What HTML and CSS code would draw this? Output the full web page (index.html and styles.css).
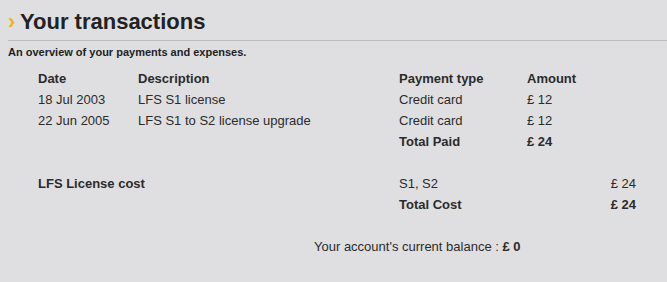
FILE: index.html
```html
<!DOCTYPE html>
<html>
<head>
<meta charset="utf-8">
<link rel="stylesheet" href="styles.css">
</head>
<body>
<div class="page">
  <header class="head">
    <span class="chev">›</span>
    <h1 class="title">Your transactions</h1>
  </header>
  <p class="sub">An overview of your payments and expenses.</p>
  <div class="content">
    <div class="grid">
      <div class="b">Date</div><div class="b">Description</div><div class="b">Payment type</div><div class="b">Amount</div>
      <div>18 Jul 2003</div><div>LFS S1 license</div><div>Credit card</div><div>£ 12</div>
      <div>22 Jun 2005</div><div>LFS S1 to S2 license upgrade</div><div>Credit card</div><div>£ 12</div>
      <div></div><div></div><div class="b">Total Paid</div><div class="b">£ 24</div>
    </div>
    <div class="grid second">
      <div class="b span2">LFS License cost</div><div>S1, S2</div><div class="r">£ 24</div>
      <div class="span2"></div><div class="b">Total Cost</div><div class="b r">£ 24</div>
    </div>
    <div class="balance">Your account's current balance : <b>£ 0</b></div>
  </div>
</div>
</body>
</html>
```
FILE: styles.css
```css
html, body {
  margin: 0;
  padding: 0;
  background: #dfdfe1;
}
body {
  font-family: "Liberation Sans", Arial, sans-serif;
  color: #2b2b2b;
}
.page {
  width: 667px;
  height: 282px;
}
.head {
  display: flex;
  align-items: center;
  gap: 4px;
  margin-left: 8px;
  padding: 9px 0 5px 0;
  border-bottom: 1px solid #b9b9bb;
}
.chev {
  color: #f2b01e;
  font-size: 22px;
  font-weight: bold;
  line-height: 26px;
  width: 8px;
}
.title {
  margin: 0;
  font-size: 22px;
  line-height: 26px;
  font-weight: bold;
  color: #222;
}
.sub {
  margin: 5px 0 0 8px;
  font-size: 11px;
  line-height: 13px;
  font-weight: bold;
  color: #222;
}
.content {
  padding: 9px 0 0 38px;
  font-size: 13px;
  line-height: 21px;
}
.grid {
  display: grid;
  grid-template-columns: 100px 261px 128px 109px;
}
.second {
  margin-top: 21px;
}
.span2 {
  grid-column: span 2;
}
.b {
  font-weight: bold;
}
.r {
  text-align: right;
}
.balance {
  margin-top: 21px;
  padding-left: 276px;
}
```
